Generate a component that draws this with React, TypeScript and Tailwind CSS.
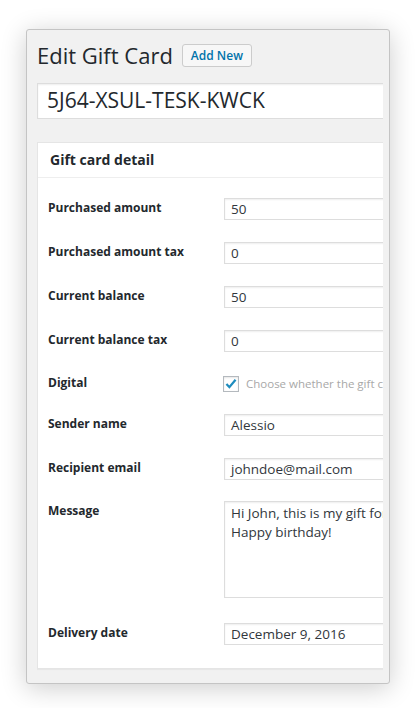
const font = { fontFamily: '"Open Sans", "Noto Sans", sans-serif' };

type Row = { label: string; value?: string; h: number };

const rows: Row[] = [
  { label: "Purchased amount", value: "50", h: 44 },
  { label: "Purchased amount tax", value: "0", h: 44 },
  { label: "Current balance", value: "50", h: 44 },
  { label: "Current balance tax", value: "0", h: 44 },
];

function TextInput({ value }: { value: string }) {
  return (
    <div className="h-[22px] w-[300px] border border-[#ddd] bg-white shadow-[inset_0_1px_2px_rgba(0,0,0,0.07)] pl-[6px] text-[13.5px] leading-[20px] text-[#32373c]">
      {value}
    </div>
  );
}

function Label({ children, top = 2 }: { children: string; top?: number }) {
  return (
    <div
      className={`w-[176px] shrink-0 text-[12px] leading-[16px] font-bold text-[#23282d] ${top === 0 ? "pt-0" : "pt-[2px]"}`}
    >
      {children}
    </div>
  );
}

export default function App() {
  return (
    <div className="min-h-screen bg-white pt-[29px] pl-[26px]" style={font}>
      <div className="h-[655px] w-[364px] rounded-[3px] border border-[#c4c4c4] bg-[#f1f1f1] pl-[10px] pr-[6px] shadow-[0_4px_26px_rgba(0,0,0,0.2)]">
        <div className="h-full overflow-hidden">
          <div className="w-[440px] pt-[11px]">
            <div className="flex h-[29px] items-center gap-[9px]">
              <h1 className="text-[22px] leading-[29px] text-[#23282d]">Edit Gift Card</h1>
              <span className="flex h-[23px] items-center rounded-[3px] border border-[#ccc] bg-[#f7f7f7] px-[8px] text-[12px] font-semibold text-[#0073aa]">
                Add New
              </span>
            </div>

            <div className="mt-[13px] flex h-[36px] w-[420px] items-center border border-[#ddd] bg-white pl-[9px] text-[21px] text-[#23282d] shadow-[inset_0_1px_2px_rgba(0,0,0,0.07)]">
              5J64-XSUL-TESK-KWCK
            </div>

            <div className="mt-[23px] w-[420px] border border-[#e5e5e5] bg-white shadow-[0_1px_1px_rgba(0,0,0,0.04)]">
              <div className="flex h-[35px] items-center border-b border-[#eee] pb-[2px] pl-[12px] text-[14px] font-bold text-[#23282d]">
                Gift card detail
              </div>

              <div className="pl-[10px] pt-[20px] pb-[23px]">
                {rows.map((r) => (
                  <div key={r.label} className="flex items-start" style={{ height: r.h }}>
                    <Label>{r.label}</Label>
                    <TextInput value={r.value ?? ""} />
                  </div>
                ))}

                <div className="flex h-[40px] items-start pt-[1px]">
                  <Label top={0}>Digital</Label>
                  <div className="-ml-[1px] flex items-center gap-[7px]">
                    <span className="flex h-[16px] w-[16px] items-center justify-center border border-[#b4b9be] bg-white shadow-[inset_0_1px_2px_rgba(0,0,0,0.1)]">
                      <svg width="14" height="14" viewBox="0 0 20 20">
                        <path d="M3.5 10l4.2 4.5 8.8-10.5" fill="none" stroke="#1e8cbe" strokeWidth="3.2" />
                      </svg>
                    </span>
                    <span className="whitespace-nowrap text-[11.5px] text-[#a8a8a8]">
                      Choose whether the gift card is digital or physical
                    </span>
                  </div>
                </div>

                <div className="flex h-[44px] items-start">
                  <Label>Sender name</Label>
                  <TextInput value="Alessio" />
                </div>

                <div className="flex h-[43px] items-start">
                  <Label>Recipient email</Label>
                  <TextInput value="johndoe@mail.com" />
                </div>

                <div className="flex h-[122px] items-start">
                  <Label>Message</Label>
                  <div className="h-[97px] w-[300px] border border-[#ddd] bg-white pl-[6px] pt-[2px] text-[13.5px] leading-[19px] text-[#32373c] shadow-[inset_0_1px_2px_rgba(0,0,0,0.07)]">
                    <div className="whitespace-nowrap">Hi John, this is my gift for you</div>
                    <div>Happy birthday!</div>
                  </div>
                </div>

                <div className="flex items-start">
                  <Label>Delivery date</Label>
                  <TextInput value="December 9, 2016" />
                </div>
              </div>
            </div>
          </div>
        </div>
      </div>
    </div>
  );
}
